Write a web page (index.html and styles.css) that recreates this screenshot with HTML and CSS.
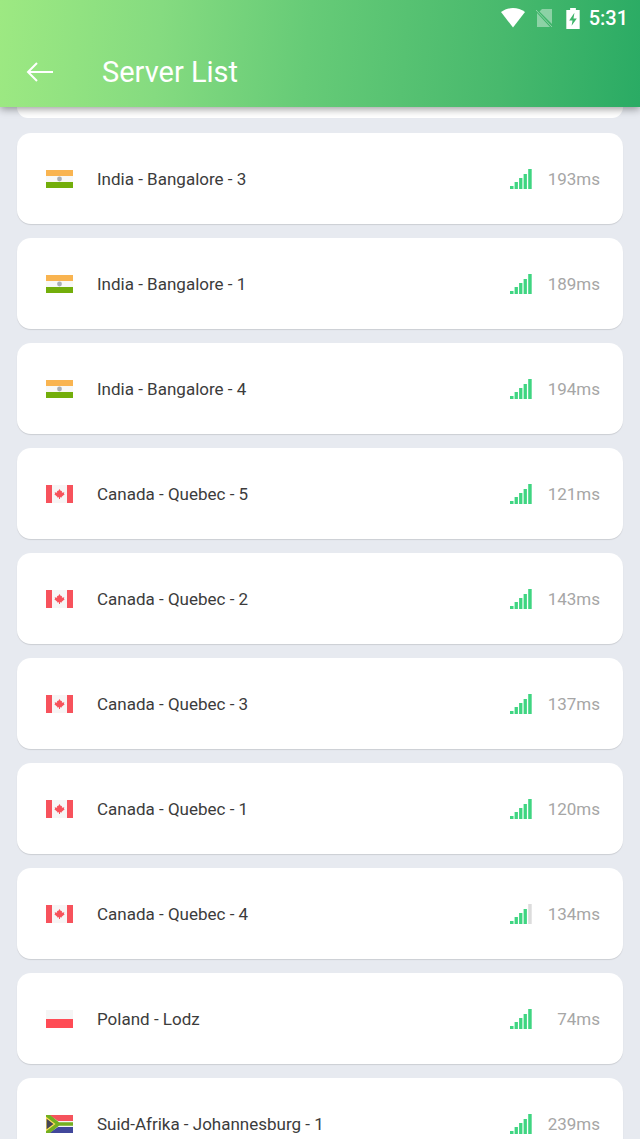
FILE: index.html
```html
<!DOCTYPE html>
<html lang="en">
<head>
<meta charset="utf-8">
<meta name="viewport" content="width=device-width, initial-scale=1">
<title>Server List</title>
<link rel="stylesheet" href="styles.css">
</head>

<body>
<!-- shared icons -->
<svg class="defs" width="0" height="0" aria-hidden="true">
  <symbol id="india" viewBox="0 0 27 18">
    <rect width="27" height="18" fill="#f8f8f6"/>
    <rect width="27" height="6" fill="#f9b450"/>
    <rect y="12" width="27" height="6" fill="#73ae0b"/>
    <circle cx="13.5" cy="9" r="2.4" fill="#a9aeb4"/>
  </symbol>
  <symbol id="canada" viewBox="0 0 27 18">
    <rect width="27" height="18" fill="#f7f5f5"/>
    <rect width="6" height="18" fill="#f7525c"/>
    <rect x="21" width="6" height="18" fill="#f7525c"/>
    <path d="M13.5 4l1.500 2.200 1-.4-.1 2 2.400-.6-.4 1.500.8.6-3 2.400.1.8-1.800-.3v1.800h-1v-1.800l-1.800.3.1-.8-3-2.400.8-.6-.4-1.500 2.400.6-.1-2 1 .4z" fill="#f7525c"/>
  </symbol>
  <symbol id="poland" viewBox="0 0 27 18">
    <rect width="27" height="9" fill="#f5f5f5"/>
    <rect y="9" width="27" height="9" fill="#ff4b55"/>
  </symbol>
  <symbol id="south-africa" viewBox="0 0 27 18">
    <rect width="27" height="18" fill="#f5f5f5"/>
    <path d="M3 0h24v6H12z" fill="#f5535c"/>
    <path d="M3 18h24v-6H12z" fill="#41479b"/>
    <path d="M0 0h4l9 7.2h14v3.6H13L4 18H0z" fill="#73af20"/>
    <path d="M0 2.5L8.5 9 0 15.5z" fill="#464655" stroke="#ffe15a" stroke-width="1.2"/>
  </symbol>
  <symbol id="signal" viewBox="0 0 22 20">
    <path d="M0 17h3.500v3H0zM4.600 13h3.300v7H4.600zM9.100 9h3.300v11H9.100zM13.600 5h3.300v15h-3.300z" fill="#3fd581"/>
    <path d="M18.200 0h3.500v20h-3.500z" fill="currentColor"/>
  </symbol>
</svg>

<header class="header">
  <div class="status">
    <svg class="wifi" viewBox="0 0 24 20" aria-hidden="true"><path d="M0 4C7-1.300 17-1.300 24 4L12 19.500z" fill="#fff"/></svg>
    <svg class="sim" viewBox="0 0 17 20" aria-hidden="true">
      <path d="M6 1h10v15L3.500 3.500zM1 5l13 14H1z" fill="#fff"/>
      <path d="M0 2l16 17" stroke="#fff" stroke-width="1"/>
    </svg>
    <svg class="battery" viewBox="0 0 14 22" aria-hidden="true">
      <path d="M4 0h6v2h4v20H0V2h4z" fill="#fff"/>
      <path d="M8.500 5L3 13h3.500L5.500 18.500 11 11H7.500z" fill="#40b56b"/>
    </svg>
    <span class="clock">5:31</span>
  </div>
  <div class="toolbar">
    <button class="back" type="button" aria-label="Back">
      <svg viewBox="0 0 28 20" aria-hidden="true"><path d="M11 1L2 10l9 9M2 10h25" fill="none" stroke="#fff" stroke-width="2"/></svg>
    </button>
    <h1>Server List</h1>
  </div>
</header>

<main>
<div class="card-end"></div>
<ul class="servers">
  <li class="card">
    <svg class="flag" role="img" aria-label="India"><use href="#india"/></svg>
    <span class="name">India - Bangalore - 3</span>
    <svg class="signal" aria-hidden="true"><use href="#signal"/></svg>
    <span class="ping">193ms</span>
  </li>
  <li class="card">
    <svg class="flag" role="img" aria-label="India"><use href="#india"/></svg>
    <span class="name">India - Bangalore - 1</span>
    <svg class="signal" aria-hidden="true"><use href="#signal"/></svg>
    <span class="ping">189ms</span>
  </li>
  <li class="card">
    <svg class="flag" role="img" aria-label="India"><use href="#india"/></svg>
    <span class="name">India - Bangalore - 4</span>
    <svg class="signal" aria-hidden="true"><use href="#signal"/></svg>
    <span class="ping">194ms</span>
  </li>
  <li class="card">
    <svg class="flag" role="img" aria-label="Canada"><use href="#canada"/></svg>
    <span class="name">Canada - Quebec - 5</span>
    <svg class="signal" aria-hidden="true"><use href="#signal"/></svg>
    <span class="ping">121ms</span>
  </li>
  <li class="card">
    <svg class="flag" role="img" aria-label="Canada"><use href="#canada"/></svg>
    <span class="name">Canada - Quebec - 2</span>
    <svg class="signal" aria-hidden="true"><use href="#signal"/></svg>
    <span class="ping">143ms</span>
  </li>
  <li class="card">
    <svg class="flag" role="img" aria-label="Canada"><use href="#canada"/></svg>
    <span class="name">Canada - Quebec - 3</span>
    <svg class="signal" aria-hidden="true"><use href="#signal"/></svg>
    <span class="ping">137ms</span>
  </li>
  <li class="card">
    <svg class="flag" role="img" aria-label="Canada"><use href="#canada"/></svg>
    <span class="name">Canada - Quebec - 1</span>
    <svg class="signal" aria-hidden="true"><use href="#signal"/></svg>
    <span class="ping">120ms</span>
  </li>
  <li class="card">
    <svg class="flag" role="img" aria-label="Canada"><use href="#canada"/></svg>
    <span class="name">Canada - Quebec - 4</span>
    <svg class="signal weak" aria-hidden="true"><use href="#signal"/></svg>
    <span class="ping">134ms</span>
  </li>
  <li class="card">
    <svg class="flag" role="img" aria-label="Poland"><use href="#poland"/></svg>
    <span class="name">Poland - Lodz</span>
    <svg class="signal" aria-hidden="true"><use href="#signal"/></svg>
    <span class="ping">74ms</span>
  </li>
  <li class="card">
    <svg class="flag" role="img" aria-label="South Africa"><use href="#south-africa"/></svg>
    <span class="name">Suid-Afrika - Johannesburg - 1</span>
    <svg class="signal" aria-hidden="true"><use href="#signal"/></svg>
    <span class="ping">239ms</span>
  </li>
</ul>
</main>
</body>
</html>
```

FILE: styles.css
```css
* {
box-sizing: border-box;
}
body {
margin: 0;
height: 100vh;
overflow: hidden;
display: flex;
flex-direction: column;
background: #e7eaf0;
font-family: Roboto, "Liberation Sans", sans-serif;
}
.defs {
position: absolute;
}

/* header */
.header {
position: relative;
flex: none;
color: #fff;
background: linear-gradient(95deg, #9de982 0%, #85db80 25%, #66cb77 48%, #48b96d 78%, #2aab64 100%);
box-shadow: 0 2px 8px rgba(0, 0, 0, 0.4);
}
.status {
display: flex;
justify-content: flex-end;
align-items: center;
height: 36px;
padding-right: 12px;
}
.wifi {
width: 24px;
height: 20px;
margin-right: 11px;
}
.sim {
width: 17px;
height: 20px;
margin-right: 13px;
opacity: 0.4;
}
.battery {
width: 14px;
height: 21px;
margin-right: 9px;
}
.clock {
font-size: 20px;
line-height: 24px;
font-weight: 500;
}
.toolbar {
display: flex;
align-items: center;
height: 71px;
padding-left: 26px;
}
.back {
width: 28px;
height: 20px;
margin-right: 48px;
padding: 0;
border: 0;
background: none;
}
.back svg {
display: block;
width: 28px;
height: 20px;
}
h1 {
margin: 0;
font-size: 29px;
line-height: 34px;
font-weight: 400;
}

/* list */
main {
flex: 1;
min-height: 0;
overflow: hidden;
padding: 0 17px;
}
.card-end {
height: 11px;
margin-bottom: 15px;
border-radius: 0 0 14px 14px;
background: #fff;
}
.servers {
display: flex;
flex-direction: column;
gap: 14px;
margin: 0;
padding: 0;
list-style: none;
}
.card {
display: flex;
align-items: center;
flex: none;
height: 91px;
padding: 0 23px 0 29px;
border-radius: 14px;
background: #fff;
box-shadow: 0 1px 1px rgba(0, 0, 0, 0.12);
}
.flag {
width: 27px;
height: 18px;
margin-right: 24px;
}
.name {
flex: 1;
font-size: 17px;
color: #3c3c3c;
}
.signal {
width: 22px;
height: 20px;
color: #3fd581;
}
.signal.weak {
color: #dcdcdc;
}
.ping {
width: 68px;
font-size: 17px;
text-align: right;
color: #a6a6a6;
}
```
